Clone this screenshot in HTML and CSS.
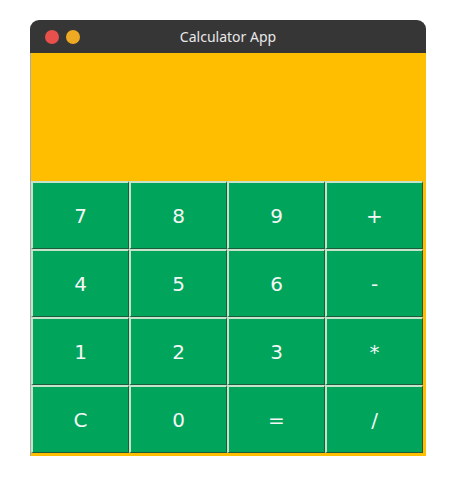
FILE: index.html
```html
<!DOCTYPE html>
<html>
<head>
<meta charset="utf-8">
<link rel="stylesheet" href="styles.css">
</head>
<body>
<div class="window">
  <div class="titlebar">
    <div class="dots"><span class="dot red"></span><span class="dot orange"></span></div>
    <div class="title">Calculator App</div>
  </div>
  <div class="app">
    <div class="display"></div>
    <div class="keys">
      <div class="key">7</div><div class="key">8</div><div class="key">9</div><div class="key">+</div>
      <div class="key">4</div><div class="key">5</div><div class="key">6</div><div class="key">-</div>
      <div class="key">1</div><div class="key">2</div><div class="key">3</div><div class="key">*</div>
      <div class="key">C</div><div class="key">0</div><div class="key">=</div><div class="key">/</div>
    </div>
  </div>
</div>
</body>
</html>
```
FILE: styles.css
```css
html, body { margin: 0; padding: 0; background: #ffffff; }
body { padding: 20px 0 0 30px; }
.window { width: 396px; }
.titlebar {
  position: relative;
  height: 33px;
  background: #363636;
  border-radius: 9px 9px 0 0;
  display: flex;
  align-items: center;
  justify-content: center;
}
.dots {
  position: absolute;
  left: 15px;
  top: 10px;
  display: flex;
  gap: 7px;
}
.dot { width: 14px; height: 14px; border-radius: 50%; display: block; }
.red { background: #e8514b; }
.orange { background: #eeaa22; }
.title {
  font-family: "Noto Sans", "DejaVu Sans", sans-serif;
  font-size: 14px;
  color: #e8e8e8;
}
.app {
  background: #ffbe00;
  border-left: 1px solid #a8a8a8;
  padding: 0 2px 3px 0;
}
.display { height: 128px; }
.keys {
  display: grid;
  grid-template-columns: repeat(4, 98px);
  grid-auto-rows: 68px;
}
.key {
  box-sizing: border-box;
  background: #00a45b;
  border-top: 2px solid #c3e3cb;
  border-left: 2px solid #c3e3cb;
  border-right: 1px solid #1e5b3a;
  border-bottom: 1px solid #1e5b3a;
  display: flex;
  align-items: center;
  justify-content: center;
  color: #f6f6f6;
  font-family: "DejaVu Sans", sans-serif;
  font-size: 20px;
}
```
